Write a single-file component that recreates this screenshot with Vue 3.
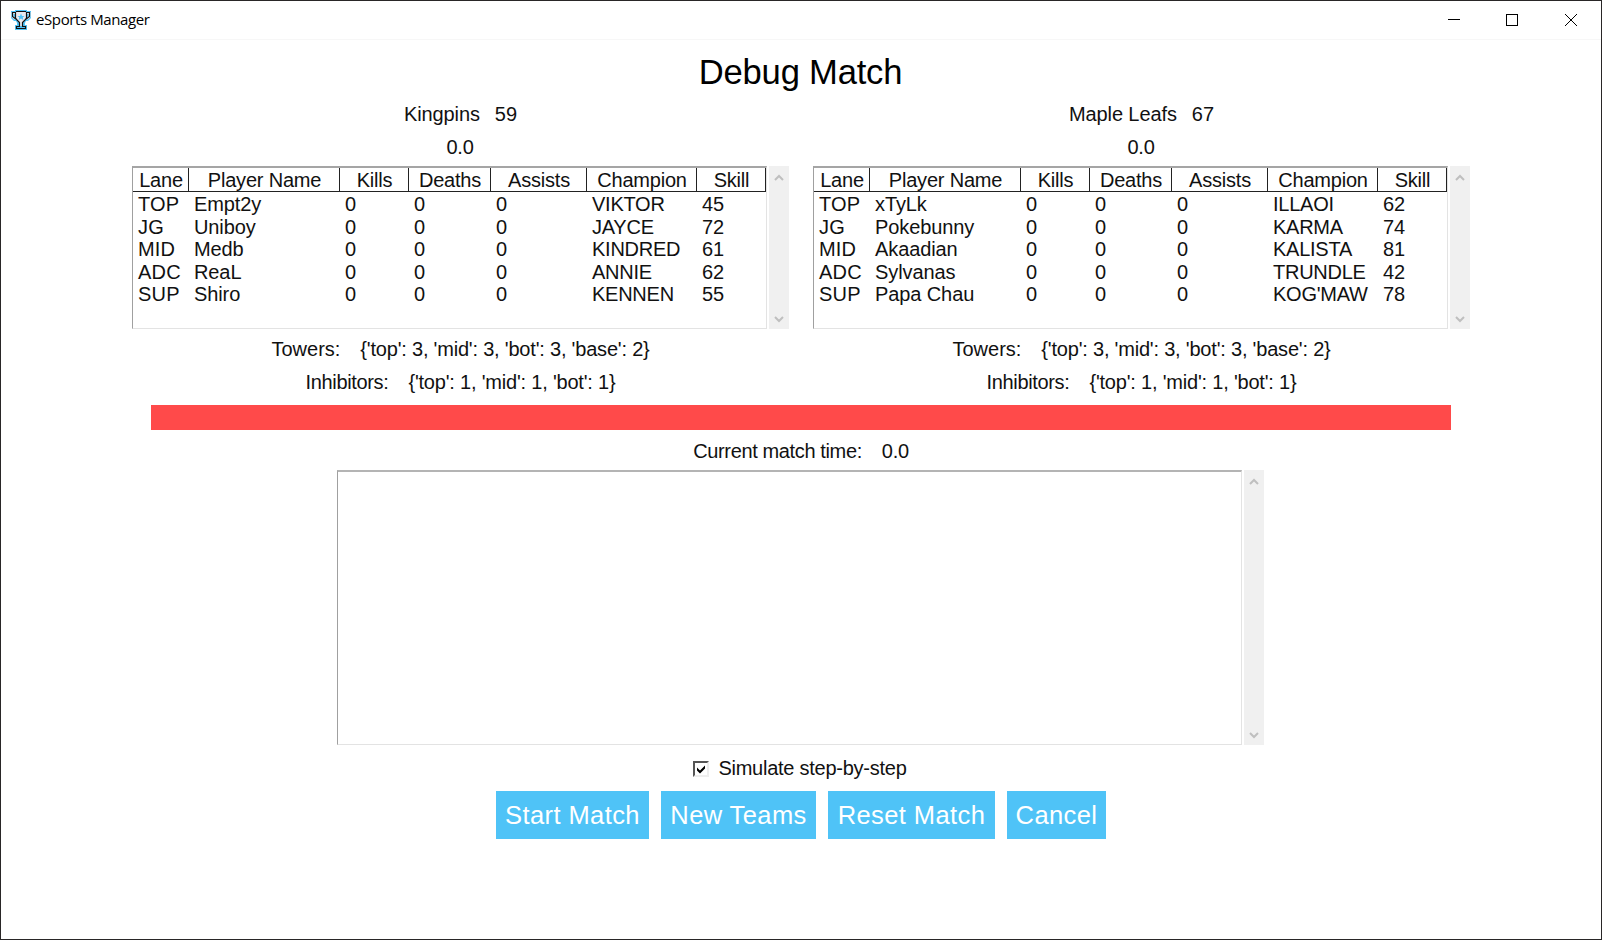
<script setup>
const columns = ['Lane', 'Player Name', 'Kills', 'Deaths', 'Assists', 'Champion', 'Skill']
const teams = [
  {
    name: 'Kingpins', rating: 59, side: 'home',
    rows: [
      ['TOP', 'Empt2y', 0, 0, 0, 'VIKTOR', 45],
      ['JG', 'Uniboy', 0, 0, 0, 'JAYCE', 72],
      ['MID', 'Medb', 0, 0, 0, 'KINDRED', 61],
      ['ADC', 'ReaL', 0, 0, 0, 'ANNIE', 62],
      ['SUP', 'Shiro', 0, 0, 0, 'KENNEN', 55],
    ],
  },
  {
    name: 'Maple Leafs', rating: 67, side: 'away',
    rows: [
      ['TOP', 'xTyLk', 0, 0, 0, 'ILLAOI', 62],
      ['JG', 'Pokebunny', 0, 0, 0, 'KARMA', 74],
      ['MID', 'Akaadian', 0, 0, 0, 'KALISTA', 81],
      ['ADC', 'Sylvanas', 0, 0, 0, 'TRUNDLE', 42],
      ['SUP', 'Papa Chau', 0, 0, 0, "KOG'MAW", 78],
    ],
  },
]
const towers = "{'top': 3, 'mid': 3, 'bot': 3, 'base': 2}"
const inhibitors = "{'top': 1, 'mid': 1, 'bot': 1}"
const buttons = [
  { label: 'Start Match', cls: 'start' },
  { label: 'New Teams', cls: 'new' },
  { label: 'Reset Match', cls: 'reset' },
  { label: 'Cancel', cls: 'cancel' },
]
</script>

<template>
  <div class="window">
    <header class="titlebar">
      <svg class="logo" width="20" height="20" viewBox="0 0 20 20">
        <path d="M4 0H16V1H20V8L17 11H15L14 13V15H16V20H4V15H6V13L5 11H3L0 8V1H4Z" fill="#4fc3f7" />
        <path d="M5 1.500H15V9L12 12.500V16H8V12.500L5 9Z" fill="#e9e9ee" />
        <path d="M4.500 3H1.500V6.500L4 9M15.500 3H18.500V6.500L16 9" fill="none" stroke="#e9e9ee" stroke-width="2" />
        <path d="M5 1.500H15M4.500 2.500H1.500V6.500L4 8.500H5.500M15.500 2.500H18.500V6.500L16 8.500H14.500M4.500 2V8.500L8.500 12.500V16.500H5.500V18.500H14.500V16.500H11.500V12.500L15.500 8.500V2" fill="none" stroke="#111" stroke-width="1.200" />
        <path d="M10 3.500L11 6H13.500L11.700 7.600L12.300 10L10 8.600L7.700 10L8.300 7.600L6.500 6H9Z" fill="#4fc3f7" />
      </svg>
      <span class="app-name">eSports Manager</span>
      <svg class="controls" width="130" height="14" viewBox="0 0 130 14" fill="none" stroke="#000">
        <path d="M0 6.500H12" />
        <rect x="58.500" y="1.500" width="11" height="11" />
        <path d="M117 1L129 13M129 1L117 13" />
      </svg>
    </header>

    <main>
      <h1>Debug Match</h1>
      <div class="teams">
        <section v-for="t in teams" :key="t.name" :class="['team', t.side]">
          <div class="line"><span class="name">{{ t.name }}</span><span class="rating">{{ t.rating }}</span></div>
          <div class="line score">0.0</div>
          <div class="scrollable">
            <div class="table">
              <div class="row head"><span v-for="c in columns" :key="c">{{ c }}</span></div>
              <div v-for="r in t.rows" :key="r[0]" class="row"><span v-for="(v, i) in r" :key="i">{{ v }}</span></div>
            </div>
            <div class="scrollbar">
              <svg width="10" height="7" viewBox="0 0 10 7"><path d="M1 6L5 2L9 6" /></svg>
              <svg width="10" height="7" viewBox="0 0 10 7"><path d="M1 1L5 5L9 1" /></svg>
            </div>
          </div>
          <div class="line after"><span class="key-t">Towers:</span><span class="val">{{ towers }}</span></div>
          <div class="line"><span class="key-i">Inhibitors:</span><span class="val">{{ inhibitors }}</span></div>
        </section>
      </div>
      <div class="bar"></div>
      <div class="line time"><span class="time-label">Current match time:</span><span class="score">0.0</span></div>
      <div class="scrollable log">
        <div class="output"></div>
        <div class="scrollbar">
          <svg width="10" height="7" viewBox="0 0 10 7"><path d="M1 6L5 2L9 6" /></svg>
          <svg width="10" height="7" viewBox="0 0 10 7"><path d="M1 1L5 5L9 1" /></svg>
        </div>
      </div>
      <div class="line step">
        <span class="check"><svg width="10" height="10" viewBox="0 0 10 10"><path d="M1 3.500L4 6.500L9 1.500V4.500L4 9.500L1 6.500Z" /></svg></span>
        <span class="step-label">Simulate step-by-step</span>
      </div>
      <div class="buttons">
        <button v-for="b in buttons" :key="b.label" :class="b.cls">{{ b.label }}</button>
      </div>
    </main>
  </div>
</template>

<style>
body { margin: 0; background: #fff; }
</style>

<style scoped>
.window {
  box-sizing: border-box;
  width: 1602px;
  height: 940px;
  border: 1px solid #292627;
  background: #fff;
  color: #111;
  font: 20px "Liberation Sans", Arial, sans-serif;
  overflow: hidden;
}
.titlebar {
  box-sizing: border-box;
  height: 39px;
  border-bottom: 1px solid #f7f7f7;
  display: flex;
  align-items: center;
  padding: 0 23px 1px 10px;
}
.app-name {
  margin: 0 0 2px 5px;
  font: 15px/20px "Open Sans", "Noto Sans", sans-serif;
  letter-spacing: -0.4px;
  color: #000;
}
.controls { margin-left: auto; }
main { display: flex; flex-direction: column; align-items: center; }
h1 {
  margin: 13px 1px 6px 0;
  font-size: 34.600px;
  font-weight: 400;
  line-height: 39px;
  letter-spacing: -0.200px;
  color: #000;
}
.teams { display: flex; gap: 24px; }
.team { width: 657px; }
.line {
  height: 33px;
  line-height: 33px;
  display: flex;
  justify-content: center;
  white-space: pre;
}
.name { letter-spacing: -0.100px; }
.score { letter-spacing: -0.300px; }
.team .score { padding-right: 1px; }
.rating { margin-left: 15px; }
.scrollable { display: flex; margin-top: 2px; height: 163px; }
.table {
  box-sizing: border-box;
  width: 635px;
  border: 1px solid #e3e3e3;
  border-top: 2px solid #a5a5a5;
  border-left-color: #a0a0a0;
}
.row {
  display: grid;
  grid-template-columns: 56px 151px 69px 82px 96px 110px 69px;
  height: 22.400px;
  line-height: 22.400px;
}
.row span { padding-left: 5px; white-space: nowrap; letter-spacing: -0.100px; }
.row span:first-child { letter-spacing: 0.200px; }
.row span:nth-child(6) { letter-spacing: -0.250px; }
.row.head { height: 24px; line-height: 25px; margin-bottom: 1.400px; }
.row.head span {
  box-sizing: border-box;
  height: 24px;
  padding: 0 0 0 1px;
  text-align: center;
  letter-spacing: -0.200px;
  border-right: 1px solid #222;
  border-bottom: 1px solid #222;
}
.scrollbar {
  box-sizing: border-box;
  width: 20px;
  margin-left: 2px;
  padding: 8px 0 6px;
  background: #f0f0f0;
  display: flex;
  flex-direction: column;
  justify-content: space-between;
  align-items: center;
}
.scrollbar svg { margin-right: 1px; }
.scrollbar path { fill: none; stroke: #bfbfbf; stroke-width: 2; }
.after { margin-top: 4px; }
.key-t, .key-i { margin-right: 20px; }
.key-i { letter-spacing: -0.350px; }
.val { letter-spacing: -0.200px; }
.bar { width: 1300px; height: 25px; margin-top: 6px; background: #ff4a4a; }
.time { margin-top: 5px; gap: 20px; }
.time-label { letter-spacing: -0.370px; }
.log { margin: 2px 1px 0 0; height: 275px; }
.output {
  box-sizing: border-box;
  width: 905px;
  border: 1px solid #e3e3e3;
  border-top: 2px solid #b4b4b4;
  border-left-color: #a0a0a0;
}
.step { margin: 7px 2px 0 0; align-items: center; }
.step-label { letter-spacing: -0.250px; }
.check {
  box-sizing: border-box;
  width: 16px;
  height: 16px;
  border: 2px solid #eee;
  border-top-color: #555;
  border-left-color: #555;
  display: flex;
  align-items: center;
  justify-content: center;
  margin-right: 9px;
}
.check path { fill: #000; }
.buttons { display: flex; gap: 12px; margin-top: 6px; }
button {
  height: 48px;
  padding: 0;
  border: 0;
  background: #4fc3f7;
  color: #fff;
  font: 25.500px/46px "Liberation Sans", Arial, sans-serif;
  letter-spacing: 0.4px;
  white-space: nowrap;
}
.start { width: 153px; }
.new { width: 155px; }
.reset { width: 167px; }
.cancel { width: 99px; }
</style>
